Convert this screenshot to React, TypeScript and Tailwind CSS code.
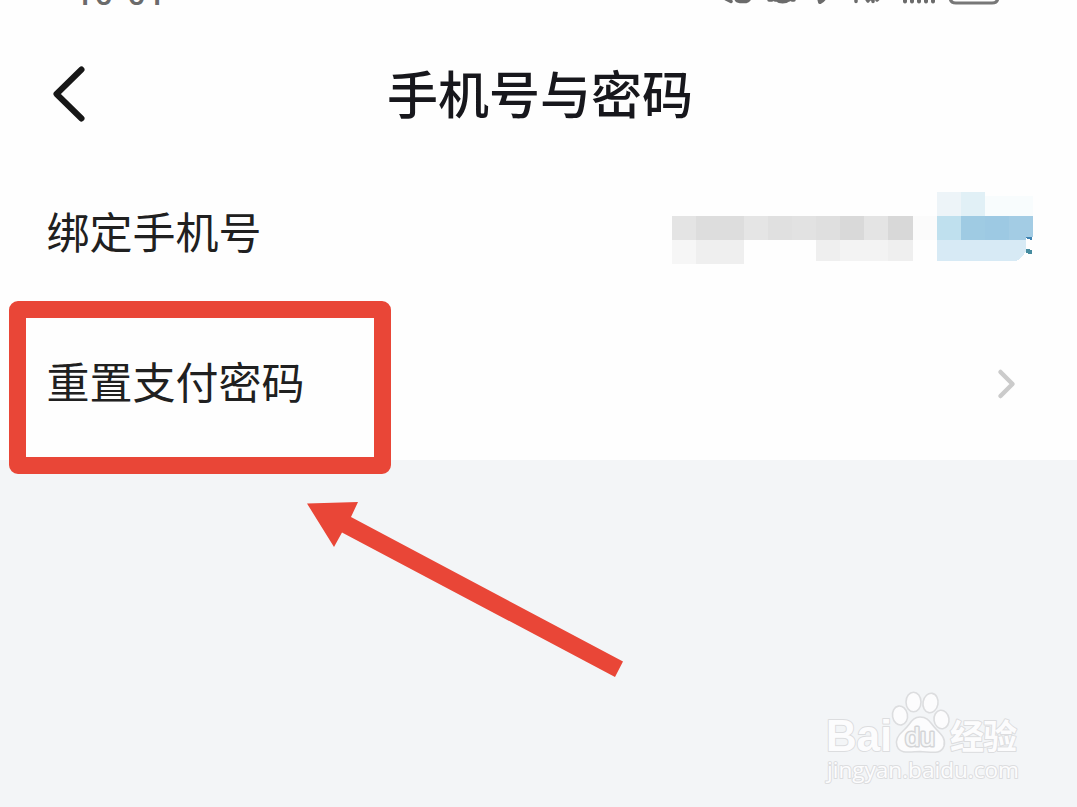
import { ReactNode } from 'react';

// Redacted phone number: [x, y, width, height, colour]
const mosaic: [number, number, number, number, string][] = [
  [0, 24, 24, 24, '#e4e4e4'],
  [24, 24, 48, 24, '#dddddd'],
  [72, 24, 24, 24, '#e5e5e5'],
  [96, 24, 24, 24, '#e0e0e0'],
  [120, 24, 24, 24, '#e2e2e2'],
  [144, 24, 24, 24, '#dfdfdf'],
  [168, 24, 24, 24, '#d9d9d9'],
  [192, 24, 24, 24, '#e4e4e4'],
  [216, 24, 25, 24, '#d8d8d8'],
  [241, 24, 24, 24, '#fbfbfb'],
  [0, 48, 24, 24, '#f6f6f6'],
  [24, 48, 48, 24, '#efefef'],
  [144, 48, 24, 21, '#efefef'],
  [168, 48, 48, 21, '#f3f3f3'],
  [216, 48, 25, 21, '#efefef'],
  [265, 0, 24, 24, '#edf4f8'],
  [289, 0, 24, 24, '#e1f0f6'],
  [313, 4, 48, 20, '#f8fcfd'],
  [265, 24, 24, 24, '#bfe0ee'],
  [289, 24, 24, 24, '#9fcbe3'],
  [313, 24, 24, 24, '#9dc9e3'],
  [337, 24, 24, 21, '#a3cce4'],
  [337, 45, 17, 3, '#a3cce4'],
];

function StatusBar() {
  return (
    <div className="relative h-5 overflow-hidden text-[#6b6b6b]">
      <div className="absolute left-[75px] -top-6 flex font-['Roboto',sans-serif] text-[32px] leading-9 font-medium tracking-[1.5px]">
        <span>10</span>
        <span className="relative -top-2 w-[13px]">:</span>
        <span>01</span>
      </div>
      <svg
        className="absolute left-[720px] top-0"
        width="290"
        height="20"
        fill="none"
        stroke="currentColor"
        strokeWidth="3.5"
        strokeLinecap="round"
      >
        <path d="M6 -1l5 2.500M16 -2q0 3 4 3.500h6q4-1 3-4M16 -1h6M25 -2v2" />
        <path d="M49 0h3M54 -2q8 7 16 1M72 0h2M55 0h14" />
        <path d="M100 2q3-1 5-5M99 -2l1 4" strokeWidth="4" />
        <path d="M136 -1v2.500M148 1l-2-3M153 -3v4.500M149 -1h4M157 0l3-3" strokeWidth="3.5" />
        <path d="M185 -2v3.500M192 -2v3.500M199 -2v3.500M206 -2v3.500M213 -2v3.500" strokeWidth="4" />
        <path d="M230 -3q0 6 6 6h36q6 0 6-6" strokeWidth="3" stroke="#777777" />
      </svg>
    </div>
  );
}

function Row({ label, children }: { label: string; children: ReactNode }) {
  return (
    <div className="flex h-[150px] items-center justify-between pl-[46.5px]">
      <span className="pb-2 text-[43px] leading-[60px] text-[#202020]">{label}</span>
      {children}
    </div>
  );
}

function Watermark() {
  return (
    <svg
      className="absolute left-[817px] top-[682px]"
      width="220"
      height="115"
      fill="#fcfcfd"
      stroke="#dcdddf"
      strokeWidth="2"
      strokeLinejoin="round"
    >
      <g strokeWidth="1.6">
        <ellipse cx="83" cy="33.500" rx="7.500" ry="9.500" transform="rotate(-10 83 33.500)" />
        <ellipse cx="96.500" cy="20" rx="7.500" ry="9.800" />
        <ellipse cx="113.500" cy="21" rx="7.500" ry="9.800" transform="rotate(10 113.500 21)" />
        <ellipse cx="124.500" cy="37.500" rx="7.500" ry="9.300" transform="rotate(-8 124.500 37.500)" />
        <path d="M103 35C95 35 93 43 87 48C80 54 78 59 80 64C83 72 91 70 103 69.500C115 70 124 73 127 64C129 57 125 53 119 47C113 41 112 35 103 35Z" />
      </g>
      <g className="[paint-order:stroke] font-['Liberation_Sans',sans-serif]">
        <text className="font-bold" x="9" y="69" fontSize="44" textLength="66" lengthAdjust="spacingAndGlyphs">Bai</text>
        <text x="88" y="64" fontSize="26" textLength="30" lengthAdjust="spacingAndGlyphs" fill="#f6f7f8" stroke="#d4d5d7" strokeWidth="3">du</text>
      </g>
      <text
        className="[paint-order:stroke] font-['Noto_Sans_CJK_SC',sans-serif] font-bold"
        x="133"
        y="66.5"
        fontSize="34"
        textLength="67"
      >
        经验
      </text>
      <text
        className="[paint-order:stroke] font-['Open_Sans',sans-serif] font-medium"
        x="10"
        y="96"
        fontSize="22"
        textLength="192"
        lengthAdjust="spacingAndGlyphs"
      >
        jingyan.baidu.com
      </text>
    </svg>
  );
}

export default function App() {
  return (
    <div className="relative flex h-[807px] w-[1077px] flex-col overflow-hidden bg-[#f3f5f7] font-['Noto_Sans_CJK_SC',sans-serif]">
      <div className="h-[460px] bg-[#fefefe]">
        <StatusBar />

        {/* Header */}
        <header className="grid h-[139px] grid-cols-[120px_1fr_120px] items-center">
          <svg className="ml-[51px]" width="40" height="66" fill="none" stroke="#171717" strokeWidth="6" strokeLinecap="round" strokeLinejoin="round">
            <path d="M30.500 12.500L5.500 37L30.500 61.500" />
          </svg>
          <h1 className="pt-1 pl-[3px] text-center text-[51px] leading-[70px] font-medium text-[#17171c]">手机号与密码</h1>
        </header>

        {/* Settings */}
        <Row label="绑定手机号">
          <svg className="mr-[38px] mb-1" width="367" height="80" shapeRendering="crispEdges">
            {mosaic.map(([x, y, width, height, fill], index) => (
              <rect key={index} x={x} y={y} width={width} height={height} fill={fill} />
            ))}
            <path d="M265 48h89v11q-5 8-10 10h-79z" fill="#d7eaf5" />
            <path d="M354 45l6 0v3l-5-1z" fill="#3e83b2" />
            <path d="M355 57l5 2-1 3-5-2z" fill="#468ca0" stroke="#468ca0" />
          </svg>
        </Row>
        <Row label="重置支付密码">
          <svg className="mr-[58px]" width="24" height="34" fill="none" stroke="#cbcbcb" strokeWidth="4.500" strokeLinecap="round" strokeLinejoin="round">
            <path d="M5.500 5L17.500 17L5.500 29" />
          </svg>
        </Row>
      </div>

      {/* Highlight and arrow */}
      <div className="absolute left-[9px] top-[301px] h-[173px] w-[382px] rounded-[9px] border-[17.5px] border-[#e94637]" />
      <svg className="absolute left-[300px] top-[495px]" width="330" height="190" fill="#e94637">
        <path d="M7 8.500L58 7L51 22L323 166.500L315 182L42 37.500L34 52Z" />
      </svg>

      <Watermark />
    </div>
  );
}
